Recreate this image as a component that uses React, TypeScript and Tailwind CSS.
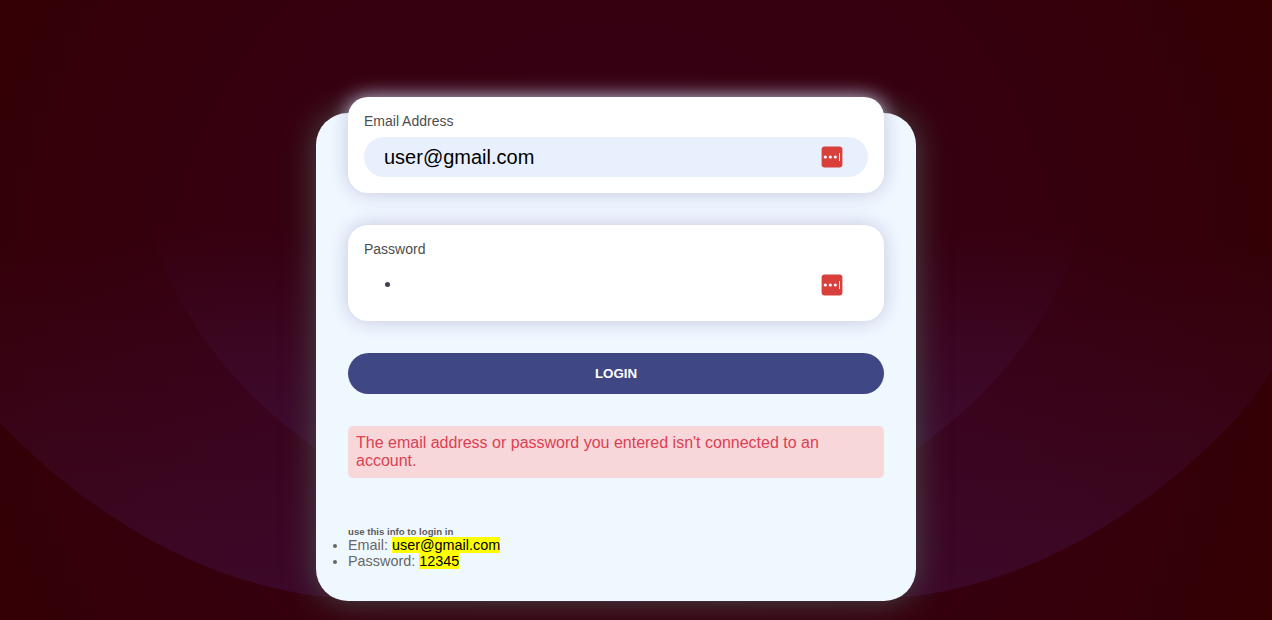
import type { ReactNode } from "react";

function Backdrop() {
  return (
    <svg className="absolute inset-0 h-full w-full" viewBox="0 0 1272 620" preserveAspectRatio="none">
      <defs>
        <radialGradient id="base" gradientUnits="userSpaceOnUse" cx="616" cy="310" r="760">
          <stop offset="0" stopColor="#390016" />
          <stop offset="0.5" stopColor="#360010" />
          <stop offset="0.88" stopColor="#340006" />
          <stop offset="1" stopColor="#330000" />
        </radialGradient>
        <linearGradient id="fadeOuter" gradientUnits="userSpaceOnUse" x1="0" y1="240" x2="0" y2="600">
          <stop offset="0" stopColor="#502078" stopOpacity="0" />
          <stop offset="1" stopColor="#502078" stopOpacity="0.26" />
        </linearGradient>
        <linearGradient id="fadeInner" gradientUnits="userSpaceOnUse" x1="0" y1="220" x2="0" y2="500">
          <stop offset="0" stopColor="#502878" stopOpacity="0" />
          <stop offset="1" stopColor="#502878" stopOpacity="0.22" />
        </linearGradient>
      </defs>
      <rect width="1272" height="620" fill="url(#base)" />
      <path
        d="M-40 240 V370 Q-22 399 0 423 C98 524 205 580 316 596 Q400 602 616 602 Q832 602 916 596 C1027 580 1134 524 1232 423 Q1254 399 1272 369 V240 Z"
        fill="url(#fadeOuter)"
      />
      <path
        d="M146 220 C180 325 240 395 316 449 Q450 530 616 530 Q782 530 916 449 C992 395 1052 325 1086 220 Z"
        fill="url(#fadeInner)"
      />
    </svg>
  );
}

function ManagerIcon() {
  return (
    <svg className="h-[22px] w-[22px] shrink-0" viewBox="0 0 22 22">
      <rect x="0.6" y="0.6" width="20.8" height="20.8" rx="3" fill="#d9403c" />
      <circle cx="4.3" cy="11" r="1.6" fill="#fff" />
      <circle cx="9.3" cy="11" r="1.6" fill="#fff" />
      <circle cx="14.3" cy="11" r="1.6" fill="#fff" />
      <rect x="18" y="7" width="1" height="8" fill="#fff" />
    </svg>
  );
}

function Field({ label, filled, children }: { label: string; filled?: boolean; children: ReactNode }) {
  return (
    <div className="h-24 rounded-[20px] bg-white p-4 shadow-[0_0_20px_#c4c4de]">
      <div className="h-4 text-sm leading-4 text-[#4d4d4d]">{label}</div>
      <div
        className={
          filled
            ? "mt-2 flex h-10 items-center justify-between rounded-full bg-[#e8f0fe] pr-[25px] pl-5"
            : "mt-2 flex h-10 items-center justify-between rounded-full pr-[25px] pl-5"
        }
      >
        {children}
        <ManagerIcon />
      </div>
    </div>
  );
}

export default function App() {
  return (
    <div className="relative h-[620px] w-full overflow-hidden bg-[#350010] font-['Liberation_Sans',Arial,sans-serif]">
      <Backdrop />
      <div className="relative ml-[316px] pt-[113px]">
        <main className="h-[488px] w-[600px] rounded-[32px] bg-[#f0f8ff] px-8 shadow-[0_0_32px_#484c4a]">
          <form className="-translate-y-4">
            <Field label="Email Address" filled>
              <span className="text-xl leading-10 text-black">user@gmail.com</span>
            </Field>
            <div className="h-8" />
            <Field label="Password">
              <span className="flex h-10 items-center pl-px">
                <span className="mb-px h-[5px] w-[5px] rounded-full bg-[#404050]" />
              </span>
            </Field>
            <button
              type="button"
              className="mt-8 flex h-[41px] w-full items-center justify-center rounded-full bg-[#3f4784] text-[13.333px] leading-[15px] font-bold text-white"
            >
              LOGIN
            </button>
            <p className="mt-8 h-[52px] rounded-[5px] bg-[#f8d7da] p-2 text-base leading-[18px] text-[#dc4052]">
              The email address or password you entered isn't connected to an account.
            </p>
            <section className="pt-12 text-[14.4px] leading-4 text-[#666]">
              <h6 className="h-[11px] text-[9.65px] leading-[11px] font-bold text-[#5c5c5c]">use this info to login in</h6>
              <ul className="list-disc">
                <li>
                  Email: <mark className="bg-[#ffff00] text-black">user@gmail.com</mark>
                </li>
                <li>
                  Password: <mark className="bg-[#ffff00] text-black">12345</mark>
                </li>
              </ul>
            </section>
          </form>
        </main>
      </div>
    </div>
  );
}
